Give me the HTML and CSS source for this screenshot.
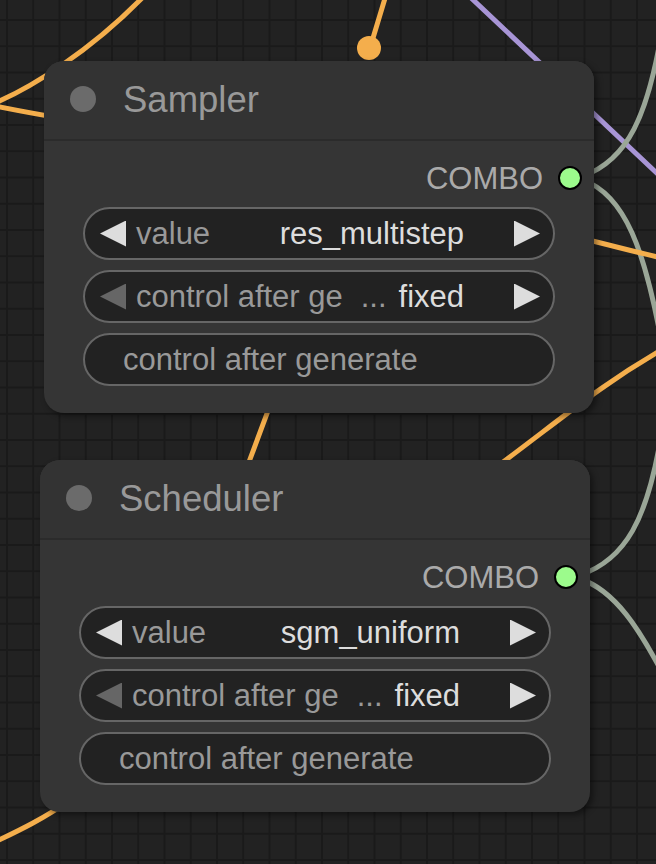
FILE: index.html
```html
<!DOCTYPE html>
<html>
<head>
<meta charset="utf-8">
<link rel="stylesheet" href="styles.css">
</head>
<body>
<div class="canvas">
  <svg class="wires" width="656" height="864" viewBox="0 0 656 864">
    <g fill="none" stroke-linecap="round">
      <path class="w-orange" d="M -5,103 C 30,88 90,52 145,-5"/>
      <path class="w-orange" d="M -5,106 C 15,110 30,113 60,118"/>
      <path class="w-orange" d="M 386,-5 L 370,48"/>
      <path class="w-purple" d="M 468,-5 L 662,178"/>
      <path class="w-gray" d="M 583,176 C 628,160 648,115 662,30"/>
      <path class="w-gray" d="M 583,180 C 625,195 645,250 662,345"/>
      <path class="w-orange" d="M 580,238 C 610,245 635,252 662,258"/>
      <path class="w-orange" d="M 665,348 C 600,385 560,420 495,468"/>
      <path class="w-orange" d="M 272,400 L 246,470"/>
      <path class="w-orange" d="M -5,842 C 20,830 45,818 70,800"/>
      <path class="w-gray" d="M 580,575 C 625,560 648,520 662,430"/>
      <path class="w-gray" d="M 580,579 C 615,590 640,630 664,676"/>
    </g>
    <circle cx="369" cy="48" r="12" class="dot-orange"/>
  </svg>

  <div class="node node-sampler">
    <div class="node-title">
      <span class="title-dot"></span>
      <span class="title-text">Sampler</span>
    </div>
    <div class="node-body">
      <div class="output-row">
        <span class="output-label">COMBO</span>
        <span class="slot"></span>
      </div>
      <div class="widgets">
        <div class="widget">
          <span class="arrow arrow-left"></span>
          <span class="w-label">value</span>
          <span class="w-value">res_multistep</span>
          <span class="arrow arrow-right"></span>
        </div>
        <div class="widget">
          <span class="arrow arrow-left arrow-disabled"></span>
          <span class="w-label">control after ge</span>
          <span class="w-ellipsis">...</span>
          <span class="w-value">fixed</span>
          <span class="arrow arrow-right"></span>
        </div>
        <div class="widget widget-text">
          <span class="w-label">control after generate</span>
        </div>
      </div>
    </div>
  </div>

  <div class="node node-scheduler">
    <div class="node-title">
      <span class="title-dot"></span>
      <span class="title-text">Scheduler</span>
    </div>
    <div class="node-body">
      <div class="output-row">
        <span class="output-label">COMBO</span>
        <span class="slot"></span>
      </div>
      <div class="widgets">
        <div class="widget">
          <span class="arrow arrow-left"></span>
          <span class="w-label">value</span>
          <span class="w-value">sgm_uniform</span>
          <span class="arrow arrow-right"></span>
        </div>
        <div class="widget">
          <span class="arrow arrow-left arrow-disabled"></span>
          <span class="w-label">control after ge</span>
          <span class="w-ellipsis">...</span>
          <span class="w-value">fixed</span>
          <span class="arrow arrow-right"></span>
        </div>
        <div class="widget widget-text">
          <span class="w-label">control after generate</span>
        </div>
      </div>
    </div>
  </div>
</div>
</body>
</html>
```

FILE: styles.css
```css
* { box-sizing: border-box; }

html, body {
  margin: 0;
  padding: 0;
  background: #222222;
}

body {
  font-family: "Liberation Sans", Arial, Helvetica, sans-serif;
}

.canvas {
  position: relative;
  width: 656px;
  height: 864px;
  overflow: hidden;
  background-color: #222222;
  background-image:
    linear-gradient(to right, #1a1a1a 2px, transparent 2px),
    linear-gradient(to bottom, #1a1a1a 2px, transparent 2px);
  background-size: 26.25px 26.25px;
  background-position: 6px 19px;
}

.wires {
  position: absolute;
  left: 0;
  top: 0;
}

.w-orange { stroke: #f4ae4c; stroke-width: 5; }
.w-purple { stroke: #a895d6; stroke-width: 5; }
.w-gray { stroke: #9aa697; stroke-width: 5; }
.dot-orange { fill: #f4ae4c; }

.node {
  position: absolute;
  width: 550px;
  height: 352px;
  background: #353535;
  border-radius: 20px;
  box-shadow: 3px 3px 6px rgba(0, 0, 0, 0.45);
  display: flex;
  flex-direction: column;
}

.node-sampler { left: 44px; top: 61px; }
.node-scheduler { left: 40px; top: 460px; }

.node-title {
  height: 80px;
  flex: none;
  display: flex;
  align-items: center;
  padding-left: 26px;
  padding-bottom: 2px;
  gap: 27px;
  background: #333333;
  border-radius: 20px 20px 0 0;
  border-bottom: 2px solid #2b2b2b;
}

.title-dot {
  width: 26px;
  height: 26px;
  border-radius: 50%;
  background: #6b6b6b;
  flex: none;
}

.title-text {
  font-size: 36.5px;
  color: #999999;
  line-height: 1;
  padding-top: 3px;
}

.node-body {
  display: flex;
  flex-direction: column;
  padding: 25px 39px 0 39px;
}

.output-row {
  display: flex;
  justify-content: flex-end;
  align-items: center;
  height: 24px;
  gap: 15px;
  margin-right: -27px;
}

.output-label {
  font-size: 31px;
  color: #aaaaaa;
  line-height: 1;
}

.slot {
  width: 24px;
  height: 24px;
  border-radius: 50%;
  background: #9cfb8c;
  border: 2px solid #000;
  flex: none;
}

.widgets {
  margin-top: 17px;
  display: flex;
  flex-direction: column;
  gap: 10px;
}

.widget {
  height: 53px;
  border: 2px solid #666666;
  border-radius: 27px;
  background: #222222;
  display: flex;
  align-items: center;
  padding: 0 13px 0 15px;
  font-size: 31px;
  line-height: 1;
}

.arrow {
  width: 26px;
  height: 26px;
  flex: none;
  background: #dddddd;
}

.arrow-left {
  clip-path: polygon(100% 0, 0 50%, 100% 100%);
  margin-right: 10px;
}

.arrow-right {
  clip-path: polygon(0 0, 100% 50%, 0 100%);
  margin-left: 50px;
}

.arrow-disabled { background: #666666; }

.w-label {
  color: #999999;
  flex: 1;
  white-space: nowrap;
}

.w-ellipsis {
  color: #999999;
  margin-right: 12px;
}

.w-value {
  color: #dddddd;
  white-space: nowrap;
}

.widget-text {
  padding-left: 38px;
}
```
